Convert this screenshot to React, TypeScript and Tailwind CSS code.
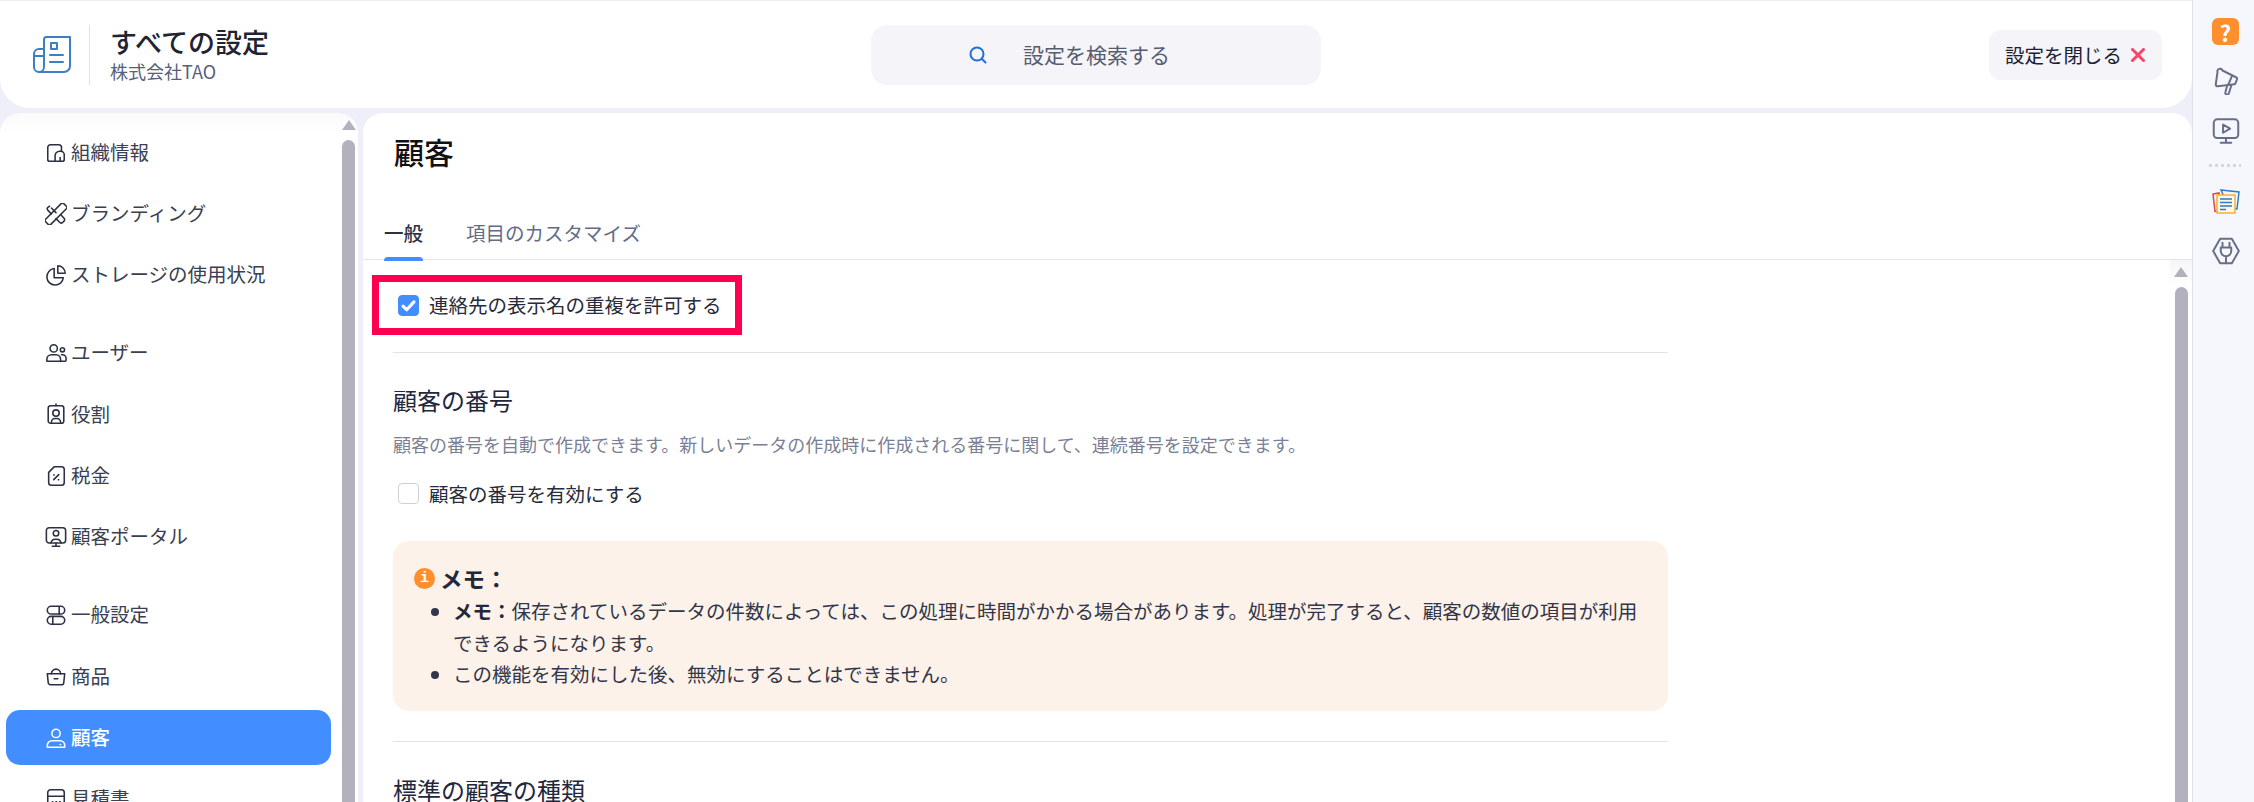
import React from 'react';

const FONT = '[font-family:"Noto_Sans_CJK_JP","Noto_Sans",sans-serif]';

function Svg({ children, className }: { children: React.ReactNode; className?: string }) {
  return (
    <svg
      viewBox="0 0 24 24"
      fill="none"
      stroke="currentColor"
      strokeWidth="1.700"
      strokeLinecap="round"
      strokeLinejoin="round"
      className={className}
      aria-hidden="true">
      {children}
    </svg>
  );
}

const navIcons: Record<string, React.ReactNode> = {
  org: (
    <>
      <path d="M3 6a3 3 0 0 1 3-3h9a3 3 0 0 1 3 3v4M3 6v13a2 2 0 0 0 2 2h14a2 2 0 0 0 2-2v-5a4 4 0 0 0-4-4h-1a5 5 0 0 0-5 5v6" />
      <path d="M16.500 17v4" />
    </>
  ),
  brand: (
    <>
      <rect x="8" y="-2" width="8" height="28" rx="2" transform="rotate(45 12 12)" />
      <path d="M5 3.500l-2.200 1.500a2 2 0 0 0 0 2.500L7 12M12 17l4.500 4.500a2 2 0 0 0 2.500 0l2-2a2 2 0 0 0 0-2.500L17 12.500M7 5.500L12 10.500" />
    </>
  ),
  storage: (
    <>
      <path d="M10 5a9 9 0 1 0 10 10h-10z" />
      <path d="M14 2a8 8 0 0 1 8 8h-8z" />
    </>
  ),
  users: (
    <>
      <circle cx="9.500" cy="7" r="4" />
      <circle cx="19" cy="8.500" r="2.300" />
      <path d="M2 21v-2a5 5 0 0 1 5-5h5a5 5 0 0 1 5 5v2z" />
      <path d="M18 14h1a4 4 0 0 1 4 4v2a1 1 0 0 1-1 1h-5" />
    </>
  ),
  role: (
    <>
      <rect x="3.500" y="3" width="17" height="19" rx="2.500" />
      <path d="M12 1v2" />
      <circle cx="12" cy="11" r="3.500" />
      <path d="M7 22v-1a4 4 0 0 1 4-4h2a4 4 0 0 1 4 4v1" />
    </>
  ),
  tax: (
    <>
      <path d="M10 2h8a3 3 0 0 1 3 3v14a3 3 0 0 1-3 3H7a3 3 0 0 1-3-3V8z" />
      <path d="M9.500 16l5.500-5.500" />
      <path d="M9.500 11h.5M14.500 16h.5" />
    </>
  ),
  portal: (
    <>
      <rect x="1.500" y="2" width="21" height="16.500" rx="3" />
      <path d="M12 18.500V22M8 22h8" />
      <circle cx="12" cy="8" r="3" />
      <path d="M6.500 18.500a5 5 0 0 1 5-4h1a5 5 0 0 1 5 4" />
    </>
  ),
  general: (
    <>
      <rect x="2.500" y="2.500" width="19" height="8.500" rx="4.250" />
      <rect x="2.500" y="13.500" width="19" height="8.500" rx="4.250" />
      <path d="M15.500 3v8M8.500 14v8" />
    </>
  ),
  item: (
    <>
      <path d="M2.500 9.500h19l-1 9.500a2.500 2.500 0 0 1-2.500 2.500H6A2.500 2.500 0 0 1 3.500 19z" />
      <path d="M7 9.500a5 5 0 0 1 10 0" />
      <path d="M10 15h4" />
    </>
  ),
  customer: (
    <>
      <circle cx="12" cy="7" r="4.500" />
      <path d="M2.500 22v-2a5 5 0 0 1 5-5h9a5 5 0 0 1 5 5v2z" />
      <path d="M16.500 19h.5" />
    </>
  ),
  quote: (
    <>
      <rect x="3" y="2" width="18" height="20" rx="3" />
      <path d="M3 9h18M8 15h.5M12 15h.5M16 15h.5" />
    </>
  ),
};

const navGroups = [
  [
    { label: '組織情報', icon: 'org' },
    { label: 'ブランディング', icon: 'brand' },
    { label: 'ストレージの使用状況', icon: 'storage' },
  ],
  [
    { label: 'ユーザー', icon: 'users' },
    { label: '役割', icon: 'role' },
    { label: '税金', icon: 'tax' },
    { label: '顧客ポータル', icon: 'portal' },
  ],
  [
    { label: '一般設定', icon: 'general' },
    { label: '商品', icon: 'item' },
    { label: '顧客', icon: 'customer', active: true },
    { label: '見積書', icon: 'quote' },
  ],
];

function Scrollbar({ className }: { className?: string }) {
  return (
    <div className={`flex shrink-0 flex-col items-center ${className ?? ''}`}>
      <div className="mt-[7px] h-0 w-0 border-x-[7.500px] border-b-[10px] border-x-transparent border-b-[#b3b1bd]" />
      <div className="mt-[10px] w-[13px] flex-1 rounded-t-[7px] bg-[#b3b1bd]" />
    </div>
  );
}

function Sidebar() {
  return (
    <aside className="flex h-full w-[358px] shrink-0 overflow-hidden rounded-t-[20px] bg-[linear-gradient(#fafafa,#ffffff_22px)]">
      <nav className="flex w-[342px] shrink-0 flex-col pl-[6px] pt-[12px]">
        {navGroups.map((group, groupIdx) => (
          <div key={groupIdx} className="mb-[23px] flex flex-col gap-[6.300px]">
            {group.map((item) => (
              <a
                key={item.label}
                className={`flex h-[55px] w-[325px] shrink-0 items-center gap-[4px] rounded-[14px] pl-[39px] text-[19.500px] ${
                  item.active ? 'bg-[#428dff] font-medium text-white' : 'text-[#3a3f51]'
                }`}>
                <Svg className={`h-[22px] w-[22px] shrink-0 ${item.active ? 'text-white' : 'text-[#2b3044]'}`}>
                  {navIcons[item.icon]}
                </Svg>
                <span className="-translate-y-[1px]">{item.label}</span>
              </a>
            ))}
          </div>
        ))}
      </nav>
      <Scrollbar className="w-[13px]" />
    </aside>
  );
}

function Header() {
  return (
    <header className="flex h-[107px] shrink-0 items-center rounded-b-[30px] bg-white pl-[33px] pr-[30px]">
      <svg viewBox="0 0 38 37" fill="none" stroke="#3d80c2" strokeWidth="2" strokeLinejoin="round" strokeLinecap="round" className="h-[37px] w-[38px] shrink-0" aria-hidden="true">
        <path d="M11 14V3.500A2.500 2.500 0 0 1 13.500 1H37V30a6 6 0 0 1-6 6H6" />
        <path d="M6 36a5 5 0 0 1-5-5V18a5 5 0 0 1 5-5h5v18a5 5 0 0 1-5 5z" />
        <path d="M1 20h10M17 19h13M17 26h13" />
        <rect x="18" y="7" width="6" height="6" />
      </svg>
      <div className="ml-[18px] h-[60px] w-px shrink-0 bg-[#e2e3ea]" />
      <div className="ml-[21px] flex w-[760px] shrink-0 flex-col">
        <h1 className="-ml-px -mt-[2px] text-[27px] font-medium leading-[34px] text-[#1f2433]">すべての設定</h1>
        <p className="-ml-[1px] text-[18px] leading-[24px] text-[#56607a]">株式会社TAO</p>
      </div>
      <div className="flex h-[60px] w-[450px] shrink-0 items-center rounded-[16px] bg-[#f4f4f9] pl-[98px]">
        <svg viewBox="0 0 18 18" fill="none" stroke="#1f6fd8" strokeWidth="2" strokeLinecap="round" className="h-[18px] w-[18px] shrink-0" aria-hidden="true">
          <circle cx="8" cy="8" r="6.500" />
          <path d="M13 13l3.500 3.500" />
        </svg>
        <span className="ml-[36px] text-[21px] text-[#555c70]">設定を検索する</span>
      </div>
      <button className="ml-auto flex h-[50px] w-[173px] shrink-0 items-center rounded-[12px] bg-[#f4f4f9] pl-[16px] text-[19.500px] text-[#1c2030]">
        <span>設定を閉じる</span>
        <svg viewBox="0 0 14 14" fill="none" stroke="#f5476c" strokeWidth="3" strokeLinecap="round" className="ml-[9px] h-[14px] w-[14px]" aria-hidden="true">
          <path d="M1.500 1.500l11 11M12.500 1.500l-11 11" />
        </svg>
      </button>
    </header>
  );
}

function Checkbox({ checked }: { checked?: boolean }) {
  return (
    <span
      className={`flex h-[21px] w-[21px] shrink-0 items-center justify-center rounded-[4px] border ${
        checked ? 'border-[#428dff] bg-[#428dff]' : 'border-[#cfd0d8] bg-white'
      }`}>
      {checked && (
        <svg viewBox="0 0 14 14" fill="none" stroke="white" strokeWidth="2.600" strokeLinecap="round" strokeLinejoin="round" className="h-[17px] w-[17px]" aria-hidden="true">
          <path d="M2.500 7.500l3 3 6-6.500" />
        </svg>
      )}
    </span>
  );
}

function MainPanel() {
  return (
    <main className="flex h-full min-w-0 flex-1 flex-col overflow-hidden rounded-t-[20px] bg-white">
      <h2 className="ml-[31px] mt-[13px] text-[30px] font-medium leading-[50px] text-[#111]">顧客</h2>
      <div className="mt-[32px] flex h-[52px] shrink-0 items-start gap-[43px] border-b border-[#e3e4ec] pl-[21px] text-[19.500px]">
        <div className="relative h-[52px] font-medium leading-[50px] text-[#2d3142]">
          <span>一般</span>
          <span className="absolute bottom-[-1px] left-0 h-[4px] w-full rounded-t-[4px] bg-[#428dff]" />
        </div>
        <div className="leading-[50px] text-[#646b85]">項目のカスタマイズ</div>
      </div>

      <div className="flex min-h-0 flex-1">
        <div className="w-[1807px] shrink-0 overflow-hidden pl-[9px] pt-[15px]">
          <div className="flex h-[60px] w-[370px] items-center border-[7px] border-[#ff0050] pl-[19px] text-[19.500px] text-[#272b3b]">
            <Checkbox checked />
            <span className="ml-[10px]">連絡先の表示名の重複を許可する</span>
          </div>
          <div className="ml-[21px] w-[1275px] text-[#31364a]">
            <div className="mt-[17px] border-t border-[#e3e4e9]" />
            <h3 className="mt-[30px] text-[24px] leading-[34px] text-[#23273a]">顧客の番号</h3>
            <p className="mt-[14px] text-[18px] leading-[26px] text-[#7b7f95]">
              顧客の番号を自動で作成できます。新しいデータの作成時に作成される番号に関して、連続番号を設定できます。
            </p>
            <div className="mt-[22px] flex items-center pl-[5px] text-[19.500px] text-[#272b3b]">
              <Checkbox />
              <span className="ml-[10px]">顧客の番号を有効にする</span>
            </div>
            <div className="mt-[33px] h-[170px] rounded-[16px] bg-[#fdf2e9] pl-[21px] pr-[26px] pt-[20px]">
              <div className="flex items-center">
                <span className="flex h-[21px] w-[21px] shrink-0 items-center justify-center rounded-full bg-[#ff8f2e] font-['Liberation_Mono',monospace] text-[15px] font-bold leading-none text-white">
                  i
                </span>
                <strong className="ml-[5px] text-[22.500px] font-bold leading-[34px] text-[#23273a]">メモ：</strong>
              </div>
              <ul className="ml-[39px] list-disc text-[19.500px] leading-[31.500px]">
                <li>
                  <strong className="font-bold text-[#23273a]">メモ：</strong>
                  保存されているデータの件数によっては、この処理に時間がかかる場合があります。処理が完了すると、顧客の数値の項目が利用できるようになります。
                </li>
                <li>この機能を有効にした後、無効にすることはできません。</li>
              </ul>
            </div>
            <div className="mt-[30px] border-t border-[#e3e4e9]" />
            <h3 className="mt-[31px] text-[24px] leading-[34px] text-[#23273a]">標準の顧客の種類</h3>
          </div>
        </div>
        <Scrollbar className="w-[22px] bg-[linear-gradient(#f6f6f6,#ffffff_26px)]" />
      </div>
    </main>
  );
}

function Rail() {
  return (
    <aside className="flex w-[62px] shrink-0 flex-col border-l border-[#dfe0ee] bg-[#f6f7fd] pl-[19px] pt-[18px]">
      <span className="flex h-[27px] w-[27px] items-center justify-center rounded-[6px] bg-[#ff8f2e] text-[22px] font-bold leading-none text-white">?</span>
      <Svg className="mt-[22px] h-[28px] w-[28px] text-[#686e88]">
        <path d="M9 3l12 6a1 1 0 0 1 .500 1.300l-1.500 4a1 1 0 0 1-1 .500L5 16.500a1.500 1.500 0 0 1-1.800-1.500l1.500-10.500A2 2 0 0 1 9 3z" />
        <path d="M17 8l-3 7M13 16l-1.500 5.500a1.500 1.500 0 0 0 3 1l2-6.500" />
      </Svg>
      <Svg className="mt-[22px] h-[28px] w-[28px] text-[#686e88]">
        <rect x="1.500" y="2" width="21" height="16" rx="3" />
        <path d="M12 18v4M7.500 22h9M9.500 6.500l6 3.500-6 3.500z" />
      </Svg>
      <div className="ml-[-3px] mt-[19px] h-[3px] w-[32px] bg-[repeating-linear-gradient(90deg,#d4d5de_0_3px,transparent_3px_6px)]" />
      <svg viewBox="0 0 28 26" className="mt-[22px] h-[26px] w-[28px]" fill="none" aria-hidden="true">
        <path d="M1 5l6-1 1 18-5 .500z" stroke="#e8414e" strokeWidth="1.500" />
        <path d="M9 1l18 2-2 17-8-1z" stroke="#2b7bd0" strokeWidth="1.500" />
        <rect x="5" y="6" width="18" height="18" fill="#fff6e6" stroke="#f7b02d" strokeWidth="1.500" />
        <path d="M8 10h12M8 13.500h12M8 17h12M8 20.500h6" stroke="#2b7bd0" strokeWidth="1.500" />
      </svg>
      <Svg className="mt-[22px] h-[28px] w-[28px] text-[#686e88]">
        <path d="M7 1.500h10l6 10.500-6 10.500H7L1 12z" />
        <path d="M9 5v4M15 5v4M7.500 9h9v3a4.500 4.500 0 0 1-9 0zM12 16.500v6" />
      </Svg>
    </aside>
  );
}

export default function App() {
  return (
    <div className={`flex h-[802px] w-[2254px] overflow-hidden bg-[#eeeff8] ${FONT}`}>
      <div className="flex h-full w-[2192px] shrink-0 flex-col pt-px">
        <Header />
        <div className="mt-[5px] flex min-h-0 flex-1 gap-[5px]">
          <Sidebar />
          <MainPanel />
        </div>
      </div>
      <Rail />
    </div>
  );
}
